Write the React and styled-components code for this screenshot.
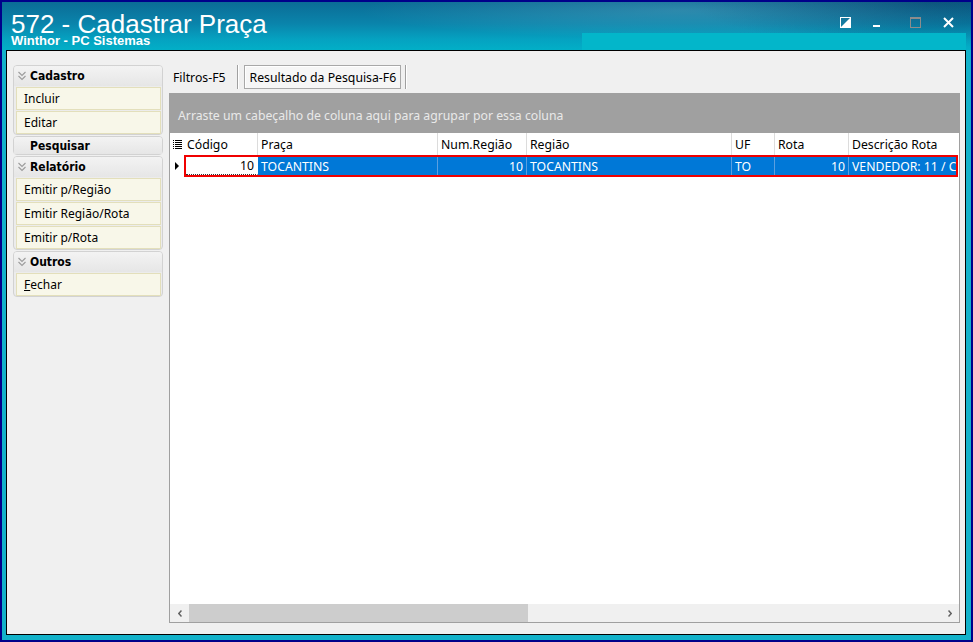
import React from 'react';
import styled, { createGlobalStyle } from 'styled-components';

const Global = createGlobalStyle`
  html, body { margin: 0; padding: 0; background: #fff; }
  body { width: 973px; height: 642px; overflow: hidden; }
  * { box-sizing: border-box; }
`;

const Window = styled.div`
  width: 973px;
  height: 642px;
  border: 2px solid #00008a;
  background: #13b2ca;
  display: flex;
  flex-direction: column;
`;

const TitleBar = styled.header`
  height: 48px;
  flex: none;
  display: flex;
  justify-content: space-between;
  align-items: flex-start;
  color: #fff;
  background:
    linear-gradient(#03b6ca, #03b6ca) right 5px bottom 0 / 384px 17px no-repeat,
    radial-gradient(ellipse 460px 40px at 70% 18%, rgba(255, 255, 255, 0.14), transparent 70%),
    radial-gradient(ellipse 320px 60px at 96% 0%, rgba(0, 30, 70, 0.35), transparent 75%),
    linear-gradient(180deg, #0b6c96 0%, #0a84ab 45%, #05a2c1 78%, #02afc7 100%);
`;

const TitleText = styled.div`
  padding: 11px 0 0 9px;
  font-family: "Liberation Sans", Arial, sans-serif;
`;

const AppTitle = styled.h1`
  margin: 0;
  font-size: 26px;
  font-weight: 400;
  line-height: 22px;
  white-space: nowrap;
`;

const AppSub = styled.div`
  font-size: 13px;
  font-weight: 700;
  line-height: 12px;
  white-space: nowrap;
`;

const Controls = styled.div`
  display: flex;
  align-items: flex-start;
  padding: 15px 17px 0 0;
`;

const CtrlButton = styled.span`
  display: block;
  margin-left: ${p => p.$gap || 0}px;
  margin-top: ${p => p.$top || 0}px;
  line-height: 0;
  svg { display: block; }
`;

const Client = styled.main`
  flex: 1;
  margin: 0 5px 5px 4px;
  border: 1px solid #000;
  background: #f0f0f0;
  display: flex;
  padding: 14px 5px 11px 6px;
  gap: 6px;
  min-height: 0;
`;

const Sidebar = styled.nav`
  width: 150px;
  flex: none;
  display: flex;
  flex-direction: column;
  gap: 1px;
  font-family: "Noto Sans", "DejaVu Sans", sans-serif;
  font-size: 12px;
  color: #000;
`;

const Group = styled.section`
  border: 1px solid #d2d2d2;
  border-radius: 4px;
  background: #ececec;
`;

const GroupHeader = styled.div`
  height: ${p => (p.$collapsed ? 17 : 20)}px;
  display: flex;
  align-items: center;
  gap: 4px;
  padding-left: 4px;
  font-family: "DejaVu Sans Condensed", "DejaVu Sans", sans-serif;
  font-weight: 700;
  font-size: 12px;
  border-radius: 3px 3px 0 0;
  background: linear-gradient(180deg, #f3f3f3 0%, #e6e6e6 100%);
`;

const ChevronSlot = styled.span`
  width: 8px;
  height: 10px;
  flex: none;
  display: block;
  svg { display: block; }
`;

const Items = styled.div`
  display: flex;
  flex-direction: column;
  gap: 1px;
  padding: 1px 1px 0 2px;
`;

const Item = styled.div`
  height: 23px;
  display: flex;
  align-items: center;
  padding-left: 7px;
  background: #f8f7e9;
  border: 1px solid #e3dfbb;
  white-space: nowrap;
  u { text-decoration: underline; }
`;

const Main = styled.div`
  flex: 1;
  min-width: 0;
  display: flex;
  flex-direction: column;
  gap: 4px;
  font-family: "Noto Sans", "DejaVu Sans", sans-serif;
  font-size: 12.25px;
`;

const TabBar = styled.div`
  height: 24px;
  flex: none;
  display: flex;
  align-items: stretch;
  padding-left: 4px;
`;

const Tab = styled.div`
  display: flex;
  align-items: center;
  white-space: nowrap;
  padding: ${p => (p.$active ? '0 4px 0 5px' : '0 11px 0 0')};
  margin: ${p => (p.$active ? '0 4px 0 5px' : '0')};
  border: ${p => (p.$active ? '1px solid #a8a8a8' : 'none')};
  background: ${p => (p.$active ? '#f6f6f6' : 'transparent')};
  box-shadow: ${p => (p.$active ? 'inset 1px 1px 0 #fff' : 'none')};
`;

const TabSep = styled.div`
  width: 2px;
  border-left: 1px solid #a0a0a0;
  border-right: 1px solid #fff;
`;

const Grid = styled.div`
  flex: 1;
  min-height: 0;
  border: 1px solid #a0a0a0;
  background: #fff;
  display: flex;
  flex-direction: column;
  overflow: hidden;
`;

const GroupPanel = styled.div`
  height: 39px;
  flex: none;
  background: #a0a0a0;
  color: #e9e9e9;
  display: flex;
  align-items: center;
  padding: 3px 0 0 8px;
  white-space: nowrap;
`;

const COLS = '14px 74px 180px 89px 205px 43px 74px 150px';

const HeaderRow = styled.div`
  height: 22px;
  flex: none;
  display: grid;
  grid-template-columns: ${COLS};
  background: #fff;
`;

const HeadCell = styled.div`
  display: flex;
  align-items: center;
  padding-left: 3px;
  border-right: 1px solid #dcdcdc;
  white-space: nowrap;
  overflow: hidden;
`;

const IndicatorCell = styled.div`
  display: flex;
  align-items: center;
  justify-content: center;
  svg { display: block; }
`;

const DataRow = styled.div`
  height: 22px;
  flex: none;
  display: flex;
`;

const RowIndicator = styled(IndicatorCell)`
  width: 14px;
  flex: none;
  justify-content: flex-start;
  padding-left: 5px;
`;

const Highlight = styled.div`
  width: 774px;
  flex: none;
  border: 2px solid #f00000;
  display: grid;
  grid-template-columns: 72px 180px 89px 205px 43px 74px 150px;
  overflow: hidden;
`;

const Cell = styled.div`
  display: flex;
  align-items: center;
  justify-content: ${p => (p.$right ? 'flex-end' : 'flex-start')};
  padding: 0 3px 0 3px;
  white-space: nowrap;
  overflow: hidden;
  color: ${p => (p.$focus ? '#000' : '#fff')};
  background: ${p => (p.$focus ? '#fff' : '#0078d7')};
  border-right: 1px solid ${p => (p.$focus ? '#fff' : '#5a9fe0')};
  border-bottom: ${p => (p.$focus ? '1px dotted #333' : '0')};
`;

const Body = styled.div`
  flex: 1;
  background: #fff;
`;

const HScroll = styled.div`
  height: 18px;
  flex: none;
  display: flex;
  align-items: stretch;
  background: #f0f0f0;
`;

const ScrollBtn = styled.div`
  width: 19px;
  flex: none;
  display: flex;
  align-items: center;
  justify-content: center;
  svg { display: block; }
`;

const Track = styled.div`
  flex: 1;
  display: flex;
`;

const Thumb = styled.div`
  width: 339px;
  background: #cdcdcd;
`;

const Chevrons = () => (
  <svg width="8" height="10" viewBox="0 0 8 10" fill="none" stroke="#9c9c9c" strokeWidth="1.1">
    <polyline points="0.5,1 4,4.5 7.5,1" />
    <polyline points="0.5,5 4,8.5 7.5,5" />
  </svg>
);

const columns = ['Código', 'Praça', 'Num.Região', 'Região', 'UF', 'Rota', 'Descrição Rota'];

export default function App() {
  return (
    <>
      <Global />
      <Window>
        <TitleBar>
          <TitleText>
            <AppTitle>572 - Cadastrar Praça</AppTitle>
            <AppSub>Winthor - PC Sistemas</AppSub>
          </TitleText>
          <Controls>
            <CtrlButton>
              <svg width="11" height="11" viewBox="0 0 11 11">
                <rect x="0.5" y="0.5" width="10" height="10" fill="none" stroke="#fff" />
                <polygon points="11,0 11,11 0,11" fill="#fff" />
              </svg>
            </CtrlButton>
            <CtrlButton $gap={22} $top={8}>
              <svg width="7" height="2" viewBox="0 0 7 2">
                <rect width="7" height="2" fill="#fff" />
              </svg>
            </CtrlButton>
            <CtrlButton $gap={30}>
              <svg width="11" height="11" viewBox="0 0 11 11">
                <rect x="0.5" y="0.5" width="10" height="10" fill="none" stroke="#8c8c8c" />
                <rect x="0" y="0" width="11" height="2" fill="#8c8c8c" />
              </svg>
            </CtrlButton>
            <CtrlButton $gap={22}>
              <svg width="11" height="11" viewBox="0 0 11 11">
                <path d="M1 1 L10 10 M10 1 L1 10" stroke="#fff" strokeWidth="2" />
              </svg>
            </CtrlButton>
          </Controls>
        </TitleBar>

        <Client>
          <Sidebar>
            <Group>
              <GroupHeader><ChevronSlot><Chevrons /></ChevronSlot>Cadastro</GroupHeader>
              <Items>
                <Item>Incluir</Item>
                <Item>Editar</Item>
              </Items>
            </Group>
            <Group>
              <GroupHeader $collapsed><ChevronSlot />Pesquisar</GroupHeader>
            </Group>
            <Group>
              <GroupHeader><ChevronSlot><Chevrons /></ChevronSlot>Relatório</GroupHeader>
              <Items>
                <Item>Emitir p/Região</Item>
                <Item>Emitir Região/Rota</Item>
                <Item>Emitir p/Rota</Item>
              </Items>
            </Group>
            <Group>
              <GroupHeader><ChevronSlot><Chevrons /></ChevronSlot>Outros</GroupHeader>
              <Items>
                <Item><u>F</u>echar</Item>
              </Items>
            </Group>
          </Sidebar>

          <Main>
            <TabBar>
              <Tab>Filtros-F5</Tab>
              <TabSep />
              <Tab $active>Resultado da Pesquisa-F6</Tab>
              <TabSep />
            </TabBar>
            <Grid>
              <GroupPanel>Arraste um cabeçalho de coluna aqui para agrupar por essa coluna</GroupPanel>
              <HeaderRow>
                <IndicatorCell>
                  <svg width="9" height="9" viewBox="0 0 9 9" fill="#000">
                    <rect x="0" y="0" width="1" height="1" />
                    <rect x="2" y="0" width="7" height="1" />
                    <rect x="0" y="2" width="1" height="1" />
                    <rect x="2" y="2" width="7" height="1" />
                    <rect x="0" y="4" width="1" height="1" />
                    <rect x="2" y="4" width="7" height="1" />
                    <rect x="0" y="6" width="1" height="1" />
                    <rect x="2" y="6" width="7" height="1" />
                    <rect x="0" y="8" width="1" height="1" />
                    <rect x="2" y="8" width="7" height="1" />
                  </svg>
                </IndicatorCell>
                {columns.map(c => <HeadCell key={c}>{c}</HeadCell>)}
              </HeaderRow>
              <DataRow>
                <RowIndicator>
                  <svg width="4" height="8" viewBox="0 0 4 8"><polygon points="0,0 4,4 0,8" fill="#000" /></svg>
                </RowIndicator>
                <Highlight>
                  <Cell $focus $right>10</Cell>
                  <Cell>TOCANTINS</Cell>
                  <Cell $right>10</Cell>
                  <Cell>TOCANTINS</Cell>
                  <Cell>TO</Cell>
                  <Cell $right>10</Cell>
                  <Cell>VENDEDOR: 11 / COMPRADOR</Cell>
                </Highlight>
              </DataRow>
              <Body />
              <HScroll>
                <ScrollBtn>
                  <svg width="4" height="7" viewBox="0 0 4 7" fill="none" stroke="#606060" strokeWidth="1.5">
                    <polyline points="3.5,0.5 0.8,3.5 3.5,6.5" />
                  </svg>
                </ScrollBtn>
                <Track><Thumb /></Track>
                <ScrollBtn>
                  <svg width="4" height="7" viewBox="0 0 4 7" fill="none" stroke="#606060" strokeWidth="1.5">
                    <polyline points="0.5,0.5 3.2,3.5 0.5,6.5" />
                  </svg>
                </ScrollBtn>
              </HScroll>
            </Grid>
          </Main>
        </Client>
      </Window>
    </>
  );
}
